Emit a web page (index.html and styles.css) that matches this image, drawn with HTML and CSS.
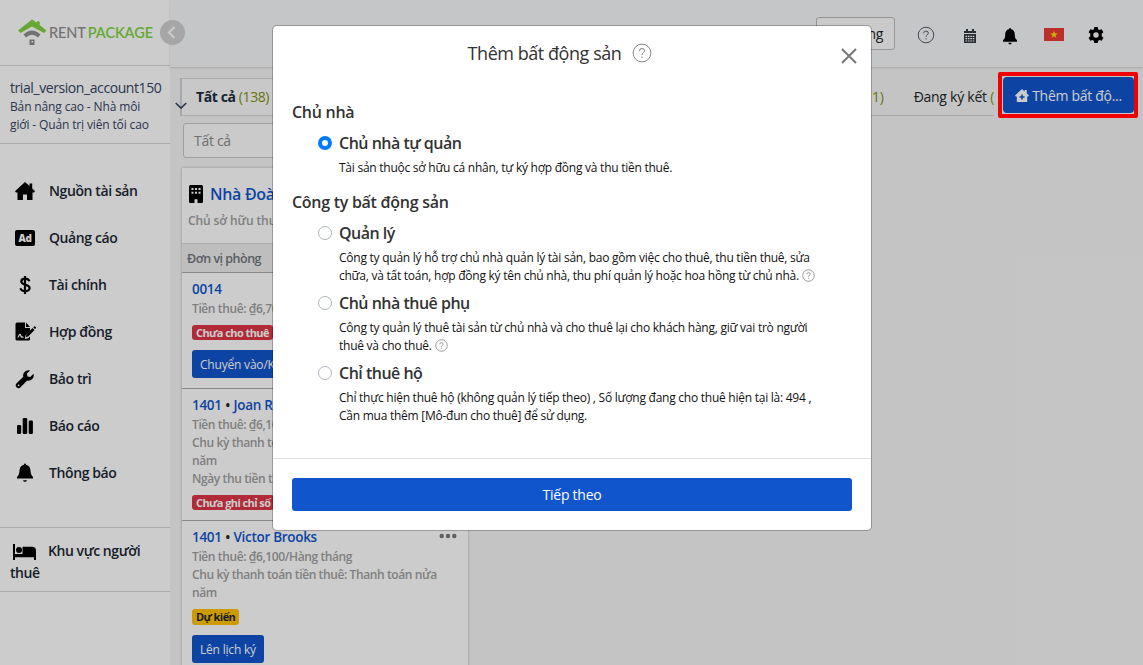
FILE: index.html
```html
<!DOCTYPE html>
<html lang="vi">
<head>
<meta charset="utf-8">
<title>Rent Package</title>
<link rel="stylesheet" href="styles.css">
</head>
<body>
<div class="app">
  <aside class="sidebar">
    <div class="brand">
      <svg class="brand-mark" viewBox="0 0 30 27" width="30" height="27"><path d="M1 11.500 15 .5l4.500 3L20.500 2l2.500 1-.5 3L29.500 11.500l-2.500 2.500L15 7.500 3.500 14z" fill="#80d340"/><path d="M6.500 15.500q8.500-8 17 0L21 18.500q-6-5.500-12 0z" fill="#8f8f8f"/><path d="M12.500 20.500h5v5.500h-5z" fill="#8a8a8a"/><path d="M14.500 22H16v1.500h-1.500z" fill="#fff"/></svg>
      <span class="brand-name">RENT<b>PACKAGE</b></span>
    </div>
    <div class="account">
      <div class="account-name">trial_version_account150</div>
      <div class="account-plan">Bản nâng cao - Nhà môi<br>giới - Quản trị viên tối cao</div>
    </div>
    <nav class="menu">
      <a class="menu-item"><svg viewBox="0 0 20 18" width="20" height="18"><path d="M10 0 0 9.200 1 10.500h1.500V18H8v-5.500h4V18h5.500v-7.500H19l1-1.300-2.800-2.600V1.500h-2.700v2.600z"/></svg><span>Nguồn tài sản</span></a>
      <a class="menu-item"><svg viewBox="0 0 20 16" width="20" height="16"><rect width="20" height="16" rx="2"/><text class="ad-text" x="3.500" y="11.500">Ad</text></svg><span>Quảng cáo</span></a>
      <a class="menu-item"><svg viewBox="0 0 20 20" width="20" height="20"><path d="M14.300 6.200C13.400 2.800 6.300 2.700 6.300 6.500c0 4 8.300 2.600 8.300 6.500 0 4.200-8.100 3.900-9.200.2M10 1v18" fill="none" stroke="#000" stroke-width="2.200"/></svg><span>Tài chính</span></a>
      <a class="menu-item"><svg viewBox="0 0 21 19" width="21" height="19"><path d="M2 .5h8V6h5v3l-4.500 4.500-.7 3.500 3.500-.7L15 14.600V17q0 1.500-1.500 1.500H2Q.5 18.500.5 17V2Q.5.500 2 .5z"/><path d="M11 .5 15 5h-4zM17.500 6l2 2-6.300 6.500-2.300.5.500-2.500zM18.200 5.200l.9-.8q.6-.4 1 0l.8.800q.4.600 0 1l-.9.900z"/><path d="M2.500 15.500q1 0 2-3 .7-.5 1 .5l.8 2q.7-1 1.200 0l1 .5" fill="none" stroke="#fff" stroke-width="1.200"/></svg><span>Hợp đồng</span></a>
      <a class="menu-item"><svg viewBox="0 0 20 20" width="20" height="20"><path d="M18.500 4.700 15.300 8l-2.800-.6-.6-2.800 3.200-3.200Q11.800.6 9.500 2.900 7.600 4.900 8.300 7.700L1.600 14.300a2.700 2.700 0 0 0 3.900 3.900l6.700-6.700q2.800.7 4.900-1.300 2.300-2.400 1.400-5.500zM3.500 17.200a.9.900 0 1 1 .1-1.800.9.900 0 0 1-.1 1.800z" fill-rule="evenodd"/></svg><span>Bảo trì</span></a>
      <a class="menu-item"><svg viewBox="0 0 20 18" width="20" height="18"><rect x="2" y="8" width="4.200" height="9" rx="1.200"/><rect x="7.700" y="1" width="4.500" height="16" rx="1.200"/><rect x="13.700" y="3.500" width="4.200" height="13.500" rx="1.200"/></svg><span>Báo cáo</span></a>
      <a class="menu-item"><svg viewBox="0 0 20 20" width="20" height="20"><path d="M10 .5q1 0 1.100 1.300Q15 2.600 15.400 7q.2 5 2.600 7v1.600H2V14q2.400-2 2.600-7Q5 2.600 8.900 1.800 9 .5 10 .5zM8 17.200h4q-.3 1.600-2 1.600t-2-1.600z"/></svg><span>Thông báo</span></a>
    </nav>
    <div class="tenant-area"><svg viewBox="0 0 23 16" width="23" height="16"><path d="M0 0h2v10h7.500V2.800H19q4 0 4 4V16h-2v-2.800H2V16H0z"/><circle cx="6" cy="6" r="3"/></svg><span>Khu vực người thuê</span></div>
  </aside>

  <main class="main">
    <header class="topbar">
      <button class="top-button">Mở rộng</button>
      <svg class="top-help" viewBox="0 0 18 18" width="18" height="18"><circle cx="9" cy="9" r="7.800" fill="none" stroke="#555c68" stroke-width="1"/><path d="M6.700 7.300q0-2.300 2.300-2.300t2.300 2q0 1-1.100 1.700T9 10.800M9 12.200v1.200" fill="none" stroke="#555c68"/></svg>
      <svg class="top-calendar" viewBox="0 0 12 14" width="12" height="14"><path d="M0 2h2V0h2v2h4V0h2v2h2v2H0zM0 5h12v9H0z" fill="#343a40"/><path d="M1.500 7.300h9M1.500 9.700h9M1.500 12h9" stroke="#fff" stroke-width="1.200" stroke-dasharray="1.600 .8"/></svg>
      <svg class="top-bell" viewBox="0 0 16 17" width="16" height="17"><path d="M8 0q1 0 1 1.300Q12.800 2 12.800 6.500T15 12v1.700H1V12q2.200-1 2.200-5.500T7 1.300Q7 0 8 0zM6.200 14.700h3.600Q9.500 16.500 8 16.500t-1.800-1.800z"/></svg>
      <svg class="top-flag" viewBox="0 0 20 13" width="20" height="13"><rect width="20" height="13" fill="#ea3a34"/><path d="m10 2.800 1 2.700h2.800l-2.300 1.700.9 2.700L10 8.200 7.600 9.900l.9-2.700-2.300-1.700H9z" fill="#ffe400"/></svg>
      <svg class="top-gear" viewBox="0 0 16 16" width="16" height="16"><path d="M6.300 0h3.400l.5 2.200 1.300.8 2.200-.7 1.700 3-1.700 1.500v2.400l1.700 1.500-1.700 3-2.200-.7-1.300.8L9.700 16H6.300l-.5-2.200-1.300-.8-2.200.7-1.700-3 1.700-1.500V6.800L.6 5.300l1.700-3 2.200.7 1.300-.8zM8 5.300a2.700 2.700 0 1 0 0 5.400 2.700 2.700 0 0 0 0-5.400z" fill-rule="evenodd"/></svg>
    </header>

    <div class="tabs">
      <div class="tab tab-active"><b>Tất cả</b> <span class="count">(138)</span></div>
      <div class="tab-rest"><span class="count">(11)</span><span class="tab-sign">Đang ký kết <span class="count">(</span></span></div>
      <button class="add-button"><svg viewBox="0 0 14 13" width="14" height="13"><path d="M7 0 0 6.500l.8 1h1V13h10.400V7.500h1l.8-1-2.200-2V1H9.600v1.500z" fill="#fff"/><path d="M7 5.500v5M4.500 8h5" stroke="#1155cc" stroke-width="1.500"/></svg>Thêm bất độ...</button>
    </div>

    <div class="search">Tất cả</div>

    <section class="property">
      <div class="property-head">
        <div class="property-title"><svg viewBox="0 0 14 18" width="14" height="18"><rect width="14" height="18" rx="1.500"/><path d="M2.500 4h9M2.500 7.700h9" stroke="#fff" stroke-width="2" stroke-dasharray="2 1.500"/><path d="M5.500 18v-3.500q1.500-1 3 0V18z" fill="#fff"/></svg>Nhà Đoàn</div>
        <div class="property-owner">Chủ sở hữu thuê</div>
      </div>
      <div class="unit-label">Đơn vị phòng</div>
      <div class="unit">
        <div class="unit-title">0014</div>
        <div class="unit-info">Tiền thuê: ₫6,700</div>
        <span class="badge badge-red">Chưa cho thuê</span>
        <button class="small-button">Chuyển vào/Ký</button>
      </div>
      <div class="unit">
        <div class="unit-title">1401 <i>•</i> Joan R</div>
        <div class="unit-info">Tiền thuê: ₫6,100<br>Chu kỳ thanh toán<br>năm<br>Ngày thu tiền thuê</div>
        <span class="badge badge-red">Chưa ghi chỉ số</span>
      </div>
      <div class="unit">
        <div class="unit-title">1401 <i>•</i> Victor Brooks<svg class="more" viewBox="0 0 18 6" width="18" height="6"><circle cx="2.700" cy="3" r="2.200"/><circle cx="9" cy="3" r="2.200"/><circle cx="15.300" cy="3" r="2.200"/></svg></div>
        <div class="unit-info">Tiền thuê: ₫6,100/Hàng tháng<br>Chu kỳ thanh toán tiền thuê: Thanh toán nửa<br>năm</div>
        <span class="badge badge-yellow">Dự kiến</span>
        <button class="small-button">Lên lịch ký</button>
      </div>
    </section>
  </main>
</div>

<div class="collapse"><svg viewBox="0 0 25 25" width="25" height="25"><path d="m14.500 7-5.500 5.500 5.500 5.500" fill="none" stroke="#fff" stroke-width="2"/></svg></div>
<svg class="tab-chevron" viewBox="0 0 12 8" width="12" height="8"><path d="m.7 1 5.300 5 5.300-5" fill="none" stroke="#344563" stroke-width="1.700"/></svg>

<div class="backdrop"></div>
<div class="highlight"></div>

<div class="modal">
  <svg class="close" viewBox="0 0 16 16" width="16" height="16"><path d="m1 1 14 14M15 1 1 15" stroke="#777" stroke-width="2"/></svg>
  <div class="modal-title">Thêm bất động sản<svg viewBox="0 0 18 18" width="20" height="20"><circle cx="9" cy="9" r="8" fill="none" stroke="#777" stroke-width=".8"/><path d="M6.700 7.300q0-2.300 2.300-2.300t2.300 2q0 1-1.100 1.700T9 10.800M9 12.200v1.200" fill="none" stroke="#777" stroke-width=".9"/></svg></div>
  <div class="modal-body">
    <h3 class="group">Chủ nhà</h3>
    <div class="option"><span class="radio radio-on"></span><div><div class="option-name">Chủ nhà tự quản</div><p class="option-text">Tài sản thuộc sở hữu cá nhân, tự ký hợp đồng và thu tiền thuê.</p></div></div>
    <h3 class="group">Công ty bất động sản</h3>
    <div class="option"><span class="radio"></span><div><div class="option-name">Quản lý</div><p class="option-text">Công ty quản lý hỗ trợ chủ nhà quản lý tài sản, bao gồm việc cho thuê, thu tiền thuê, sửa<br>chữa, và tất toán, hợp đồng ký tên chủ nhà, thu phí quản lý hoặc hoa hồng từ chủ nhà.<svg viewBox="0 0 18 18" width="13" height="13"><circle cx="9" cy="9" r="8" fill="none" stroke="#777"/><path d="M6.700 7.300q0-2.300 2.300-2.300t2.300 2q0 1-1.100 1.700T9 10.800M9 12.200v1.200" fill="none" stroke="#777"/></svg></p></div></div>
    <div class="option"><span class="radio"></span><div><div class="option-name">Chủ nhà thuê phụ</div><p class="option-text">Công ty quản lý thuê tài sản từ chủ nhà và cho thuê lại cho khách hàng, giữ vai trò người<br>thuê và cho thuê.<svg viewBox="0 0 18 18" width="13" height="13"><circle cx="9" cy="9" r="8" fill="none" stroke="#777"/><path d="M6.700 7.300q0-2.300 2.300-2.300t2.300 2q0 1-1.100 1.700T9 10.800M9 12.200v1.200" fill="none" stroke="#777"/></svg></p></div></div>
    <div class="option"><span class="radio"></span><div><div class="option-name">Chỉ thuê hộ</div><p class="option-text">Chỉ thực hiện thuê hộ (không quản lý tiếp theo) , Số lượng đang cho thuê hiện tại là: 494 ,<br>Cần mua thêm [Mô-đun cho thuê] để sử dụng.</p></div></div>
  </div>
  <div class="modal-foot"><button class="next">Tiếp theo</button></div>
</div>
</body>
</html>
```

FILE: styles.css
```css
* { box-sizing: border-box; }
body { margin: 0; width: 1143px; height: 665px; overflow: hidden; font-family: "Segoe UI", "Open Sans", "Noto Sans", sans-serif; font-size: 14px; color: #212529; white-space: nowrap; }
button { font-family: inherit; border: 0; padding: 0; white-space: nowrap; }
svg { flex: none; }
.app { display: flex; height: 665px; }

.sidebar { width: 170px; flex: none; background: #fff; }
.brand { height: 66px; border-bottom: 1px solid #d9d9d9; display: flex; align-items: center; padding: 0 0 1px 17px; }
.brand-name { font-family: Lato, sans-serif; font-size: 14.5px; font-weight: 500; color: #8f8f8f; margin-left: 2px; letter-spacing: -0.1px; }
.brand-name b { color: #80d340; font-weight: 600; margin-left: 2px; }
.account { height: 78px; border-bottom: 1px solid #d9d9d9; padding: 11px 0 0 10px; color: #344563; }
.account-name { font-size: 14px; line-height: 21px; letter-spacing: -0.42px; }
.account-plan { font-size: 12px; line-height: 18px; letter-spacing: -0.14px; }
.menu { height: 383px; padding-top: 23px; }
.menu-item { display: flex; align-items: center; height: 47px; padding-left: 15px; font-size: 14px; font-weight: 600; letter-spacing: -0.4px; color: #1b2733; }
.menu-item span { margin-top: -1px; }
.menu-item svg { margin-right: 14px; }
.menu-item svg[width="21"] { margin-right: 13px; }
.ad-text { font-size: 10px; font-weight: 800; fill: #fff; letter-spacing: -0.2px; }
.tenant-area { height: 65px; border-top: 1px solid #d9d9d9; border-bottom: 1px solid #d9d9d9; padding: 12px 15px 0 10px; font-size: 14px; font-weight: 600; line-height: 22px; letter-spacing: -0.44px; white-space: normal; color: #1b2733; }
.tenant-area svg { vertical-align: -4px; margin: 0 12px 0 3px; }

.main { flex: 1; min-width: 0; background: #f6f6f6; }
.topbar { height: 67px; background: #f7f8fa; box-shadow: 0 1px 2px rgba(0,0,0,.15); display: flex; align-items: center; justify-content: flex-end; padding-right: 39px; }
.top-button { width: 79px; height: 33px; border: 1px solid #bbb; border-radius: 3px; background: #fdfdfd; font-size: 14px; color: #212529; display: flex; align-items: center; justify-content: flex-end; padding-right: 11px; letter-spacing: -0.3px; }
.top-help { margin: 3px 0 0 22px; }
.top-calendar { margin: 5px 0 0 29px; }
.top-bell { margin: 6px 0 0 26px; }
.top-flag { margin: 2px 0 0 26px; }
.top-gear { margin: 2px 0 0 24px; }

.tabs { display: flex; height: 37px; margin: 11px 0 0 10px; }
.tab { width: 120px; height: 38px; border: 1px solid #d2d5da; border-left: 2px solid #cfd3da; background: #fafafa; padding-left: 14px; line-height: 36px; font-size: 14px; letter-spacing: -0.4px; color: #212c3a; }
.tab b { font-weight: 700; }
.count { color: #82930f; }
.tab-rest { flex: 1; display: flex; justify-content: flex-end; height: 38px; border-bottom: 1px solid #d5d5d5; line-height: 37px; letter-spacing: -0.26px; }
.tab-sign { margin-left: 30px; }
.add-button { width: 131px; height: 36px; margin: -1px 9px 0; background: #1155cc; color: #fff; font-size: 14px; letter-spacing: -0.3px; border-radius: 4px; display: flex; align-items: center; justify-content: center; gap: 3px; }
.search { width: 282px; height: 35px; margin: 8px 0 0 13px; border: 1px solid #c9c9c9; border-radius: 3px; background: #fdfdfd; padding-left: 10px; line-height: 33px; color: #8b8b8b; letter-spacing: -0.3px; }

.property { width: 286px; height: 520px; margin: 10px 0 0 12px; background: #fff; box-shadow: 0 0 3px rgba(0,0,0,.25); }
.property-head { height: 76px; padding: 14px 0 0 7px; border-bottom: 1px solid #d9d9d9; }
.property-title { display: flex; align-items: center; gap: 7px; height: 24px; font-size: 16px; font-weight: 600; color: #1155cc; letter-spacing: -0.3px; }
.property-owner { margin: 6px 0 0 -1px; line-height: 18px; font-size: 12px; font-weight: 600; color: #a0a0a0; letter-spacing: -0.1px; }
.unit-label { height: 29px; line-height: 30px; padding-left: 5px; background: #eee; border-bottom: 1px solid #aaa; color: #6f757b; font-size: 12.500px; font-weight: 600; letter-spacing: -0.5px; }
.unit { padding: 5px 0 10px 10px; border-bottom: 1px solid #aaa; display: flex; flex-direction: column; align-items: flex-start; }
.unit-title { display: flex; gap: 3.500px; align-items: center; width: 265px; height: 22px; font-size: 13.500px; font-weight: 600; letter-spacing: -0.3px; color: #1155cc; }
.unit-title i { color: #222; font-style: normal; }
.more { margin-left: auto; fill: #777; position: relative; top: -1px; }
.unit-info { font-size: 12px; line-height: 18px; font-weight: 600; color: #a0a0a0; letter-spacing: -0.39px; }
.badge { margin-top: 7px; height: 15px; line-height: 15px; border-radius: 3px; padding: 0 4px; font-size: 11px; font-weight: 700; letter-spacing: -0.58px; }
.badge-red { background: #dc3545; color: #fff; }
.badge-yellow { background: #ffc107; color: #212529; height: 16px; }
.small-button { margin-top: 10px; height: 28px; padding: 0 8px; border-radius: 3px; background: #1155cc; color: #fff; font-size: 12px; letter-spacing: -0.2px; }

.collapse { position: absolute; left: 160px; top: 20px; width: 25px; height: 25px; border-radius: 50%; background: #d0d0d0; }
.tab-chevron { position: absolute; left: 175px; top: 102px; }
.backdrop { position: absolute; inset: 0; background: rgba(0,0,0,.2); }
.highlight { position: absolute; left: 998px; top: 72px; width: 140px; height: 46px; border: 4px solid #f00000; border-radius: 2px; }

.modal { position: absolute; left: 272px; top: 25px; width: 600px; height: 506px; background: #fff; border: 1px solid rgba(0,0,0,.25); border-radius: 5px; background-clip: padding-box; display: flex; flex-direction: column; }
.close { position: absolute; right: 14px; top: 22px; }
.modal-title { display: flex; justify-content: center; align-items: center; gap: 11px; height: 54px; font-size: 18px; letter-spacing: -0.45px; color: #333; padding-right: 24px; }
.modal-body { flex: 1; padding: 21px 0 0 19px; }
.group { margin: 0; height: 22px; line-height: 22px; font-size: 16px; font-weight: 600; color: #333; letter-spacing: -0.28px; }
.option { display: flex; padding-left: 26px; margin-bottom: 14px; }
.option + .option { margin-top: -16px; }
.option > div { padding-top: 7px; }
.option-name { height: 26px; line-height: 26px; font-size: 16px; font-weight: 600; color: #333; letter-spacing: -0.5px; }
.option-text { margin: 3px 0 0; font-size: 12px; line-height: 18px; color: #111; letter-spacing: -0.25px; }
.option-text svg { margin-left: 3px; vertical-align: -2px; }
.radio { width: 14px; height: 14px; border: 1px solid #adb5bd; border-radius: 50%; margin: 13px 7px 0 0; flex: none; background: #fff; }
.radio-on { border: 4px solid #007bff; }
.modal-foot { height: 72px; border-top: 1px solid #dee2e6; padding: 19px 19px 0 19px; }
.next { display: block; width: 560px; height: 33px; background: #1155cc; border-radius: 3px; color: #fff; font-size: 14px; letter-spacing: -0.25px; }
```
